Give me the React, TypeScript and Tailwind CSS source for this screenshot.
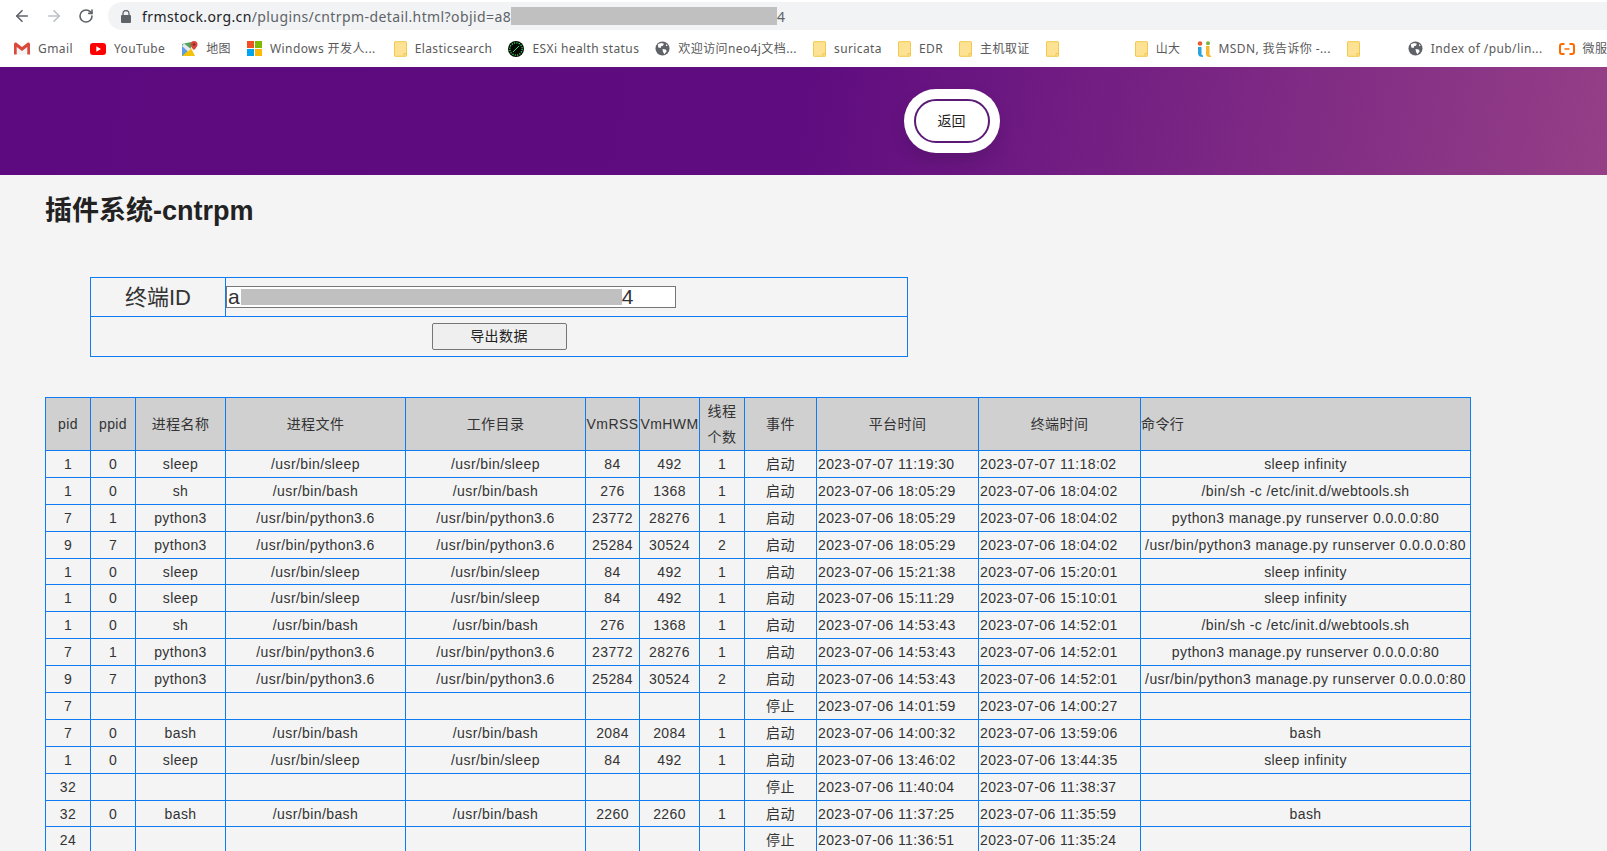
import { ArrowLeft, ArrowRight, RotateCw } from "lucide-react";

type Row = [string, string, string, string, string, string, string, string, string, string, string, string];

const SLEEP = ["sleep", "/usr/bin/sleep", "/usr/bin/sleep", "84", "492", "1"];
const SH = ["sh", "/usr/bin/bash", "/usr/bin/bash", "276", "1368", "1"];
const PY1 = ["python3", "/usr/bin/python3.6", "/usr/bin/python3.6", "23772", "28276", "1"];
const PY2 = ["python3", "/usr/bin/python3.6", "/usr/bin/python3.6", "25284", "30524", "2"];
const NONE = ["", "", "", "", "", ""];

const CMD_SH = "/bin/sh -c /etc/init.d/webtools.sh";
const CMD_PY1 = "python3 manage.py runserver 0.0.0.0:80";
const CMD_PY2 = "/usr/bin/python3 manage.py runserver 0.0.0.0:80";

function row(pid: string, ppid: string, proc: string[], ev: string, t1: string, t2: string, cmd: string): Row {
  return [pid, ppid, proc[0], proc[1], proc[2], proc[3], proc[4], proc[5], ev, t1, t2, cmd];
}

const ROWS: Row[] = [
  row("1", "0", SLEEP, "启动", "2023-07-07 11:19:30", "2023-07-07 11:18:02", "sleep infinity"),
  row("1", "0", SH, "启动", "2023-07-06 18:05:29", "2023-07-06 18:04:02", CMD_SH),
  row("7", "1", PY1, "启动", "2023-07-06 18:05:29", "2023-07-06 18:04:02", CMD_PY1),
  row("9", "7", PY2, "启动", "2023-07-06 18:05:29", "2023-07-06 18:04:02", CMD_PY2),
  row("1", "0", SLEEP, "启动", "2023-07-06 15:21:38", "2023-07-06 15:20:01", "sleep infinity"),
  row("1", "0", SLEEP, "启动", "2023-07-06 15:11:29", "2023-07-06 15:10:01", "sleep infinity"),
  row("1", "0", SH, "启动", "2023-07-06 14:53:43", "2023-07-06 14:52:01", CMD_SH),
  row("7", "1", PY1, "启动", "2023-07-06 14:53:43", "2023-07-06 14:52:01", CMD_PY1),
  row("9", "7", PY2, "启动", "2023-07-06 14:53:43", "2023-07-06 14:52:01", CMD_PY2),
  row("7", "", NONE, "停止", "2023-07-06 14:01:59", "2023-07-06 14:00:27", ""),
  row("7", "0", ["bash", "/usr/bin/bash", "/usr/bin/bash", "2084", "2084", "1"], "启动", "2023-07-06 14:00:32", "2023-07-06 13:59:06", "bash"),
  row("1", "0", SLEEP, "启动", "2023-07-06 13:46:02", "2023-07-06 13:44:35", "sleep infinity"),
  row("32", "", NONE, "停止", "2023-07-06 11:40:04", "2023-07-06 11:38:37", ""),
  row("32", "0", ["bash", "/usr/bin/bash", "/usr/bin/bash", "2260", "2260", "1"], "启动", "2023-07-06 11:37:25", "2023-07-06 11:35:59", "bash"),
  row("24", "", NONE, "停止", "2023-07-06 11:36:51", "2023-07-06 11:35:24", ""),
];

const WIDTHS = ["w-[45px]", "w-[45px]", "w-[90px]", "w-[180px]", "w-[180px]", "w-[54px]", "w-[60px]", "w-[45px]", "w-[72px]", "w-[162px]", "w-[162px]", "w-[330px]"];
const HEADERS = ["pid", "ppid", "进程名称", "进程文件", "工作目录", "VmRSS", "VmHWM", "线程个数", "事件", "平台时间", "终端时间", "命令行"];

function Folder() {
  return (
    <svg width="13" height="16" viewBox="0 0 13 16" className="shrink-0">
      <path d="M1 .7h11a.5.5 0 0 1 .5.5v13.6a.5.5 0 0 1-.5.5H1a.5.5 0 0 1-.5-.5V1.200a.5.5 0 0 1 .5-.5z" fill="#fde293" stroke="#f2c94c" />
      <path d="M10 15v-2.500h2.500" fill="none" stroke="#f2c94c" />
    </svg>
  );
}

function Globe() {
  return (
    <svg width="15" height="15" viewBox="0 0 16 16" className="shrink-0">
      <circle cx="8" cy="8" r="7.500" fill="#5f6368" />
      <path d="M3 3.500 6.500 2 9.500 3 8.500 5 6.500 5.500 6 7.500 3.500 7zM8 8.500l3.500.5 1 2-2.500 3-1.500-2.500zM11.500 3l2 2-1.500.5z" fill="#fff" />
    </svg>
  );
}

function GmailIcon() {
  return (
    <svg width="16" height="13" viewBox="0 0 16 13" className="shrink-0">
      <path d="M1 12.500V2l7 5.500L15 2v10.500" fill="none" stroke="#d9d9d9" strokeWidth="0" />
      <path d="M2.500 12.500V4.500L8 8.800l5.500-4.300v8h-1.700" fill="#f3f3f3" />
      <path d="M0 2.200C0 .6 1.700 0 2.800.9L8 5l5.200-4.100C14.300 0 16 .6 16 2.200v10.300h-2.700V5L8 9 2.700 5v7.500H0z" fill="#d9493c" />
    </svg>
  );
}

function YoutubeIcon() {
  return (
    <svg width="16" height="12" viewBox="0 0 16 12" className="shrink-0">
      <rect width="16" height="12" rx="3" fill="#f00" />
      <path d="M6.300 3.300v5.400L11 6z" fill="#fff" />
    </svg>
  );
}

function MapsIcon() {
  return (
    <svg width="16" height="16" viewBox="0 0 16 16" className="shrink-0">
      <path d="M0 3 9 1v14H0z" fill="#4fa35a" />
      <path d="M0 15 9 7l4 8z" fill="#f4c20d" />
      <path d="M0 3 6 9 0 15z" fill="#5f9cf0" />
      <path d="M2 2.500 9 8 6 10.500 0 5z" fill="#e8e8e8" />
      <path d="M12 0a3.500 3.500 0 0 1 3.500 3.500C15.500 6 12 9 12 9S8.500 6 8.500 3.500A3.500 3.500 0 0 1 12 0z" fill="#d8453a" />
      <circle cx="12" cy="3.500" r="1.200" fill="#8c2b24" />
    </svg>
  );
}

function WindowsIcon() {
  return (
    <svg width="15" height="15" viewBox="0 0 15 15" className="shrink-0">
      <rect width="7" height="7" fill="#f25022" />
      <rect x="8" width="7" height="7" fill="#7fba00" />
      <rect y="8" width="7" height="7" fill="#00a4ef" />
      <rect x="8" y="8" width="7" height="7" fill="#ffb900" />
    </svg>
  );
}

function EsxiIcon() {
  return (
    <svg width="16" height="16" viewBox="0 0 16 16" className="shrink-0">
      <circle cx="8" cy="8" r="8" fill="#050505" />
      <circle cx="8" cy="8" r="6.200" fill="none" stroke="#3ddc5a" strokeWidth="1.300" strokeDasharray="1.200 1.200" />
      <path d="M5 11 11 5" stroke="#3ddc5a" strokeWidth="1" />
    </svg>
  );
}

function MsdnIcon() {
  return (
    <svg width="14" height="16" viewBox="0 0 14 16" className="shrink-0">
      <circle cx="3" cy="2.500" r="2.300" fill="#ea5b35" />
      <circle cx="11" cy="2.200" r="2" fill="#77b43f" />
      <path d="M1 6h3.500v7c0 1 .5 1.300 1.500 1.300V16c-3 0-5-1-5-3.500z" fill="#2aa3dc" />
      <path d="M9 5h3.500v8.500c0 1 .5 1 1.500 1V16c-3 0-5-.5-5-3z" fill="#f5b82e" />
    </svg>
  );
}

function AliyunIcon() {
  return (
    <svg width="16" height="12" viewBox="0 0 16 12" className="shrink-0">
      <path d="M5.500 1H3a2 2 0 0 0-2 2v6a2 2 0 0 0 2 2h2.500M10.500 1H13a2 2 0 0 1 2 2v6a2 2 0 0 1-2 2h-2.500" fill="none" stroke="#ff6a00" strokeWidth="2" />
      <path d="M5.500 6h5" stroke="#ff6a00" strokeWidth="1.500" />
    </svg>
  );
}

function Bookmark({ icon, label, className }: { icon: React.ReactNode; label?: string; className: string }) {
  return (
    <div className={`flex shrink-0 items-center gap-2 ${className}`}>
      {icon}
      {label && <span className="whitespace-nowrap">{label}</span>}
    </div>
  );
}

function BrowserChrome() {
  return (
    <div className="h-[67px] bg-white font-['Noto_Sans','Noto_Sans_CJK_SC',sans-serif]">
      <div className="flex h-[30px] items-end">
        <div className="flex h-[28px] w-[108px] shrink-0 items-center pl-[13px]">
          <ArrowLeft size={18} strokeWidth={2.2} className="text-[#5f6368]" />
          <ArrowRight size={18} strokeWidth={2.2} className="ml-[14px] text-[#bdc1c6]" />
          <RotateCw size={16} strokeWidth={2.4} className="ml-[15px] text-[#5f6368]" />
        </div>
        <div className="flex h-[28px] flex-1 items-center rounded-l-full bg-[#f1f3f4] pl-[13px] text-[14px] text-[#5f6368]">
          <svg width="10" height="13" viewBox="0 0 10 13" className="shrink-0">
            <path d="M2 5V3.500a3 3 0 0 1 6 0V5" fill="none" stroke="#5f6368" strokeWidth="1.300" />
            <rect y="5" width="10" height="8" rx="1" fill="#5f6368" />
          </svg>
          <span className="ml-[11px] whitespace-nowrap">
            <span className="text-[#202124]">frmstock.org.cn</span>/plugins/cntrpm-detail.html?objid=a8
          </span>
          <span className="h-[18px] w-[266px] shrink-0 bg-[#c0c0c0]" />
          <span>4</span>
        </div>
      </div>
      <div className="flex h-[37px] items-center overflow-hidden whitespace-nowrap pl-[14px] text-[12px] text-[#5a5a5a]">
        <Bookmark icon={<GmailIcon />} label="Gmail" />
        <Bookmark className="ml-[17px]" icon={<YoutubeIcon />} label="YouTube" />
        <Bookmark className="ml-[17px]" icon={<MapsIcon />} label="地图" />
        <Bookmark className="ml-[16px]" icon={<WindowsIcon />} label="Windows 开发人..." />
        <Bookmark className="ml-[18px]" icon={<Folder />} label="Elasticsearch" />
        <Bookmark className="ml-[16px]" icon={<EsxiIcon />} label="ESXi health status" />
        <Bookmark className="ml-[16px]" icon={<Globe />} label="欢迎访问neo4j文档..." />
        <Bookmark className="ml-[16px]" icon={<Folder />} label="suricata" />
        <Bookmark className="ml-[16px]" icon={<Folder />} label="EDR" />
        <Bookmark className="ml-[16px]" icon={<Folder />} label="主机取证" />
        <Bookmark className="ml-[16px]" icon={<Folder />} />
        <Bookmark className="ml-[76px]" icon={<Folder />} label="山大" />
        <Bookmark className="ml-[16px]" icon={<MsdnIcon />} label="MSDN, 我告诉你 -..." />
        <Bookmark className="ml-[16px]" icon={<Folder />} />
        <Bookmark className="ml-[48px]" icon={<Globe />} label="Index of /pub/lin..." />
        <Bookmark className="ml-[16px]" icon={<AliyunIcon />} label="微服务帮助" />
      </div>
    </div>
  );
}

export default function App() {
  return (
    <div className="h-[851px] overflow-hidden bg-[#f4f4f4] font-['Liberation_Sans','Noto_Sans_CJK_SC',sans-serif] text-[14px] tracking-[0.4px] text-[#333]">
      <BrowserChrome />

      <header className="relative z-10 flex h-[108px] items-center justify-center bg-[linear-gradient(100deg,#5d0a80_0%,#5f0c80_50%,#953f87_100%)] pl-[296px]">
        <div className="rounded-full bg-white p-[10px] shadow-[0_8px_16px_rgba(0,0,0,0.12)]">
          <button className="h-[44px] w-[76px] rounded-full border-2 border-[#5c1a78] bg-white text-[14px] tracking-normal text-[#222]">
            返回
          </button>
        </div>
      </header>

      <main className="px-[45px]">
        <h1 className="mt-[18px] h-[36px] text-[27px] font-bold leading-[36px] tracking-normal text-[#222]">插件系统-cntrpm</h1>

        <table className="ml-[45px] mt-[48px] w-[818px] table-fixed border-collapse">
          <tbody>
            <tr className="h-[39px]">
              <td className="w-[135px] border border-[#0d7bf2] text-center text-[22px] tracking-normal">终端ID</td>
              <td className="border border-[#0d7bf2] p-0">
                <div className="flex h-[22px] w-[450px] items-center overflow-hidden border border-[#767676] bg-white text-[21px] tracking-normal">
                  <span className="pl-[1px]">a</span>
                  <span className="ml-[1px] h-[16px] w-[381px] shrink-0 bg-[#c0c0c0]" />
                  <span>4</span>
                </div>
              </td>
            </tr>
            <tr className="h-[40px]">
              <td colSpan={2} className="border border-[#0d7bf2] text-center">
                <button className="h-[27px] w-[135px] rounded-[2px] border border-[#767676] bg-[#efefef] text-[#222]">导出数据</button>
              </td>
            </tr>
          </tbody>
        </table>

        <table className="mt-[40px] w-[1425px] table-fixed border-collapse">
          <thead>
            <tr className="h-[53px] bg-[#d0d0d0]">
              {HEADERS.map((h, i) => (
                <th
                  key={h}
                  className={`${WIDTHS[i]} whitespace-pre-wrap border border-[#0d7bf2] p-0 font-normal leading-[26px] ${i === 11 ? "text-left" : "text-center"}`}
                >
                  {h === "线程个数" ? (
                    <span className="block">
                      线程
                      <br />
                      个数
                    </span>
                  ) : (
                    <span className="block whitespace-nowrap">{h}</span>
                  )}
                </th>
              ))}
            </tr>
          </thead>
          <tbody>
            {ROWS.map((r, idx) => (
              <tr key={idx} className="h-[26.9px]">
                {r.map((cell, i) => (
                  <td
                    key={i}
                    className={`overflow-hidden whitespace-nowrap border border-[#0d7bf2] p-0 leading-[20px] ${i === 9 || i === 10 ? "pl-[1px] text-left" : "text-center"}`}
                  >
                    {cell}
                  </td>
                ))}
              </tr>
            ))}
          </tbody>
        </table>
      </main>
    </div>
  );
}
